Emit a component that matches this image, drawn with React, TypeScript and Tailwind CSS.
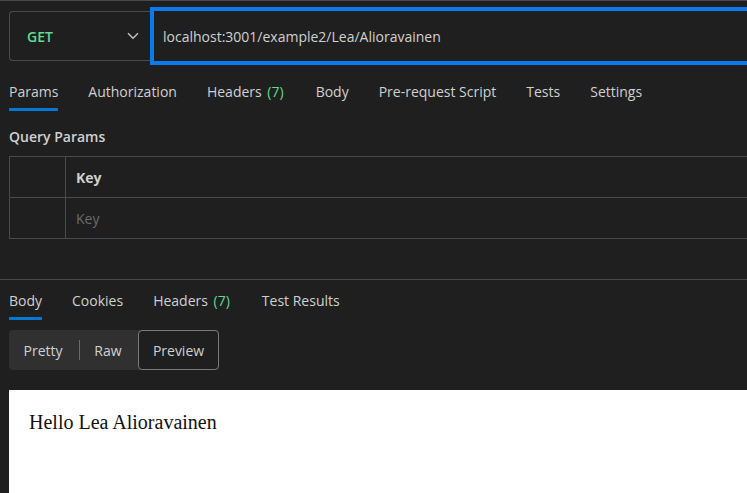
import { useState } from "react";

type Tab = { label: string; count?: number };

const requestTabs: Tab[] = [
  { label: "Params" },
  { label: "Authorization" },
  { label: "Headers", count: 7 },
  { label: "Body" },
  { label: "Pre-request Script" },
  { label: "Tests" },
  { label: "Settings" },
];

const responseTabs: Tab[] = [
  { label: "Body" },
  { label: "Cookies" },
  { label: "Headers", count: 7 },
  { label: "Test Results" },
];

function Tabs({ tabs, name }: { tabs: Tab[]; name: string }) {
  const [active, setActive] = useState(0);
  return (
    <div role="tablist" aria-label={name} className="flex h-10 gap-[30px] whitespace-nowrap">
      {tabs.map((tab, i) => (
        <button
          key={tab.label}
          role="tab"
          aria-selected={i === active}
          onClick={() => setActive(i)}
          className={
            i === active
              ? "border-b-3 border-[#0078d4] pt-[5px]"
              : "border-b-3 border-transparent pt-[5px]"
          }
        >
          {tab.label}
          {tab.count && <span className="ml-0.5 pr-0.5 text-[#5fdc8c]"> ({tab.count})</span>}
        </button>
      ))}
    </div>
  );
}

export default function App() {
  const [url, setUrl] = useState("localhost:3001/example2/Lea/Alioravainen");
  return (
    <main className="flex min-h-screen flex-col overflow-hidden border-t border-[#4a4a4a] bg-[#1f1f1f] font-['Open_Sans','Noto_Sans',sans-serif] text-sm text-[#d0d0d0]">
      <div className="flex items-center pt-1.5 pl-[9px]">
        <div className="relative h-[50px] w-[141px] shrink-0">
          <select
            aria-label="Request method"
            className="size-full appearance-none rounded-l border border-r-0 border-[#4a4a4a] bg-transparent pt-0.5 pl-[17px] font-semibold text-[#5fdc8c] outline-none"
          >
            <option>GET</option>
            <option>POST</option>
          </select>
          <svg
            viewBox="0 0 12 8"
            className="pointer-events-none absolute top-[21px] right-[11px] h-2 w-3"
            fill="none"
            stroke="#c4c4c4"
            strokeWidth="1.4"
            aria-hidden="true"
          >
            <path d="M1 1.2 6 6.2 11 1.2" />
          </svg>
        </div>
        <input
          aria-label="Request URL"
          value={url}
          onChange={(e) => setUrl(e.target.value)}
          className="h-[58px] min-w-0 flex-1 border-4 border-r-0 border-[#097bed] bg-transparent px-[9px] outline-none"
        />
      </div>

      <div className="pt-1.5 pl-[9px]">
        <Tabs tabs={requestTabs} name="Request" />
      </div>

      <section className="pl-[9px]">
        <h2 className="mt-4 mb-[9px] leading-5 font-semibold">Query Params</h2>
        <table className="w-full border-collapse text-left">
          <thead>
            <tr className="h-[41px] border-y border-[#4a4a4a]">
              <th className="w-14 border-x border-[#4a4a4a]" />
              <th className="px-2.5 pt-0.5 font-bold">Key</th>
            </tr>
          </thead>
          <tbody>
            <tr className="h-[41px] border-y border-[#4a4a4a]">
              <td className="w-14 border-x border-[#4a4a4a]" />
              <td className="px-2.5 pt-0.5">
                <input
                  aria-label="Key"
                  placeholder="Key"
                  className="block w-full bg-transparent outline-none placeholder:text-[#6b6b6b]"
                />
              </td>
            </tr>
          </tbody>
        </table>
      </section>

      <section className="mt-10 flex flex-1 flex-col border-t border-[#4a4a4a]">
        <div className="pl-[9px]">
          <Tabs tabs={responseTabs} name="Response" />
        </div>
        <div className="mt-2.5 ml-[9px] flex h-10 items-center self-start rounded bg-[#303030]">
          <button className="w-[70px] pt-0.5 pr-0.5">Pretty</button>
          <span className="h-5 w-px bg-[#6b6b6b]" />
          <button className="w-[58px] pt-0.5 pr-0.5">Raw</button>
          <button className="h-10 w-[81px] rounded border border-[#7a7a7a] bg-[#1f1f1f] pt-0.5">
            Preview
          </button>
        </div>
        <div className="mt-5 ml-[9px] flex-1 bg-white px-5 py-5 font-['Liberation_Serif',serif] text-xl leading-6 text-[#111111]">
          Hello Lea Alioravainen
        </div>
      </section>
    </main>
  );
}
